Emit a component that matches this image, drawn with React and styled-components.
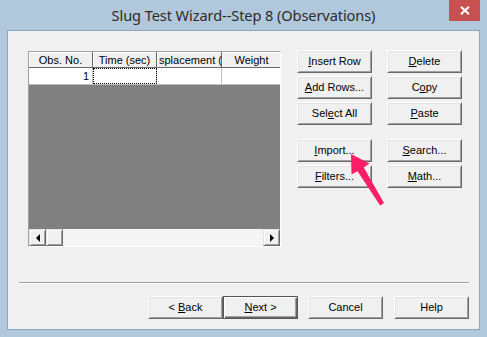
import React from "react";
import styled, { createGlobalStyle } from "styled-components";

const Global = createGlobalStyle`
  html, body { margin: 0; padding: 0; background: #b1c8dc; }
  body { font-family: "Liberation Sans", Arial, sans-serif; }
`;

const Window = styled.div`
  position: relative;
  width: 487px;
  height: 337px;
  background: #b1c8dc;
  display: flex;
  flex-direction: column;
  box-sizing: border-box;
`;

const TitleBar = styled.div`
  height: 30px;
  display: grid;
  grid-template-columns: 1fr auto 1fr;
  align-items: start;
`;

const Title = styled.div`
  grid-column: 2;
  font-family: "Noto Sans", "Open Sans", sans-serif;
  font-size: 14.6px;
  color: #2b2b2b;
  line-height: 30px;
  letter-spacing: -0.1px;
  white-space: nowrap;
`;

const CloseBtn = styled.div`
  grid-column: 3;
  justify-self: end;
  margin-right: 7px;
  width: 31px;
  height: 21px;
  background: #c75050;
  display: flex;
  align-items: center;
  justify-content: center;
`;

const Content = styled.div`
  flex: 1;
  margin: 0 7px 7px 7px;
  border: 1px solid #8fa4b8;
  background: #f0f0f0;
  display: flex;
  flex-direction: column;
`;

const TopRow = styled.div`
  display: flex;
  align-items: flex-start;
  padding: 19px 0 0 20px;
  gap: 16px;
`;

const Grid = styled.div`
  margin-top: 1px;
  width: 253px;
  height: 196px;
  box-sizing: border-box;
  border: 1px solid;
  border-color: #a0a0a0 #ffffff #ffffff #a0a0a0;
  background: #808080;
  display: flex;
  flex-direction: column;
  overflow: hidden;
  font-size: 11px;
`;

const HeaderRow = styled.div`
  display: flex;
  height: 16px;
  flex-shrink: 0;
  background: #f0f0f0;
`;

const HeaderCell = styled.div`
  width: ${(p) => p.$w}px;
  flex-shrink: 0;
  box-sizing: border-box;
  border-right: 1px solid #696969;
  border-bottom: 1px solid #696969;
  box-shadow: inset 1px 1px #ffffff;
  display: flex;
  justify-content: ${(p) => (p.$start ? "flex-start" : "center")};
  padding-left: ${(p) => (p.$start ? "2px" : "0")};
  align-items: center;
  white-space: nowrap;
  color: #000;
  line-height: 14px;
`;

const DataRow = styled.div`
  display: flex;
  height: 16px;
  flex-shrink: 0;
  background: #ffffff;
  border-bottom: 1px solid #c0c0c0;
`;

const DataCell = styled.div`
  width: ${(p) => p.$w}px;
  flex-shrink: 0;
  box-sizing: border-box;
  border-right: 1px solid #c0c0c0;
  display: flex;
  align-items: center;
  justify-content: flex-end;
  padding-right: 3px;
  color: #000;
  outline: ${(p) => (p.$focus ? "1px dotted #000" : "none")};
  outline-offset: -1px;
`;

const GreyArea = styled.div`
  flex: 1;
  background: #808080;
`;

const ScrollBar = styled.div`
  height: 17px;
  flex-shrink: 0;
  display: flex;
  background-color: #f4f4f4;
  background-image: repeating-conic-gradient(#ffffff 0 25%, #ececec 0 50%);
  background-size: 2px 2px;
`;

const Raised = styled.div`
  width: 17px;
  height: 17px;
  box-sizing: border-box;
  background: #f0f0f0;
  border: 1px solid;
  border-color: #e3e3e3 #696969 #696969 #e3e3e3;
  box-shadow: inset 1px 1px #ffffff, inset -1px -1px #a0a0a0;
  display: flex;
  align-items: center;
  justify-content: center;
`;

const Thumb = styled(Raised)`
  width: 17px;
`;

const Track = styled.div`
  flex: 1;
`;

const Arrow = styled.div`
  width: 0;
  height: 0;
  border-top: 4px solid transparent;
  border-bottom: 4px solid transparent;
  ${(p) =>
    p.$dir === "left"
      ? "border-right: 4px solid #000;"
      : "border-left: 4px solid #000;"}
`;

const Panel = styled.div`
  display: flex;
  flex-direction: column;
  gap: 14px;
`;

const BtnGroup = styled.div`
  display: grid;
  grid-template-columns: 75px 75px;
  grid-auto-rows: 23px;
  column-gap: 15px;
  row-gap: 3px;
`;

const Button = styled.div`
  box-sizing: border-box;
  width: 75px;
  height: 23px;
  background: #f0f0f0;
  border: 1px solid;
  border-color: ${(p) =>
    p.$default ? "#555555" : "#ffffff #696969 #696969 #ffffff"};
  box-shadow: ${(p) =>
    p.$default
      ? "inset 1px 1px #ffffff, inset -1px -1px #696969, inset -2px -2px #a0a0a0"
      : "inset 1px 1px #e3e3e3, inset -1px -1px #a0a0a0"};
  text-align: center;
  line-height: 20px;
  font-size: 11px;
  color: #000;
  white-space: pre;
`;

const U = styled.span`
  text-decoration: underline;
  text-underline-offset: 1px;
`;

const Separator = styled.div`
  margin: 35px 10px 0 11px;
  border-top: 1px solid #a0a0a0;
  border-bottom: 1px solid #ffffff;
`;

const BottomRow = styled.div`
  display: flex;
  margin-top: 12px;
  padding-left: 140px;
`;

const Gap = styled.div`
  width: ${(p) => p.$w}px;
`;

const Pointer = styled.svg`
  position: absolute;
  left: 0;
  top: 0;
  pointer-events: none;
`;

const widths = [64, 64, 65, 60];

export default function App() {
  return (
    <>
      <Global />
      <Window>
        <TitleBar>
          <Title>Slug Test Wizard--Step 8 (Observations)</Title>
          <CloseBtn>
            <svg width="10" height="9" viewBox="0 0 10 9">
              <path d="M1 0.8 L9 8.2 M9 0.8 L1 8.2" stroke="#fff" strokeWidth="2" />
            </svg>
          </CloseBtn>
        </TitleBar>
        <Content>
          <TopRow>
            <Grid>
              <HeaderRow>
                <HeaderCell $w={widths[0]}>Obs. No.</HeaderCell>
                <HeaderCell $w={widths[1]}>Time (sec)</HeaderCell>
                <HeaderCell $w={widths[2]} $start>splacement (</HeaderCell>
                <HeaderCell $w={widths[3]}>Weight</HeaderCell>
              </HeaderRow>
              <DataRow>
                <DataCell $w={widths[0]}>1</DataCell>
                <DataCell $w={widths[1]} $focus />
                <DataCell $w={widths[2]} />
                <DataCell $w={widths[3]} />
              </DataRow>
              <GreyArea />
              <ScrollBar>
                <Raised>
                  <Arrow $dir="left" />
                </Raised>
                <Thumb />
                <Track />
                <Raised>
                  <Arrow $dir="right" />
                </Raised>
              </ScrollBar>
            </Grid>
            <Panel>
              <BtnGroup>
                <Button><U>I</U>nsert Row</Button>
                <Button><U>D</U>elete</Button>
                <Button><U>A</U>dd Rows...</Button>
                <Button>C<U>o</U>py</Button>
                <Button>Sel<U>e</U>ct All</Button>
                <Button><U>P</U>aste</Button>
              </BtnGroup>
              <BtnGroup>
                <Button><U>I</U>mport...</Button>
                <Button><U>S</U>earch...</Button>
                <Button><U>F</U>ilters...</Button>
                <Button><U>M</U>ath...</Button>
              </BtnGroup>
            </Panel>
          </TopRow>
          <Separator />
          <BottomRow>
            <Button>{"< "}<U>B</U>ack</Button>
            <Button $default><U>N</U>ext {">"}</Button>
            <Gap $w={10} />
            <Button>Cancel</Button>
            <Gap $w={11} />
            <Button>Help</Button>
          </BottomRow>
        </Content>
        <Pointer width="487" height="337" viewBox="0 0 487 337">
          <polygon
            points="351,154 369.5,163.5 363.8,167.4 384,203 380.2,205.5 357.5,171.3 351.5,174.5"
            fill="#fa1e66"
          />
        </Pointer>
      </Window>
    </>
  );
}
